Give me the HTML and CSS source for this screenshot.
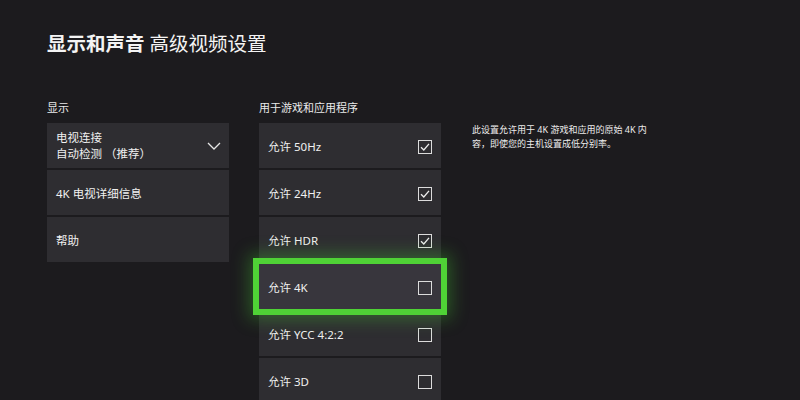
FILE: index.html
```html
<!DOCTYPE html>
<html lang="zh-CN">
<head>
<meta charset="utf-8">
<link rel="stylesheet" href="styles.css">
</head>
<body>
<div class="page">
  <h1 class="title"><span class="bold">显示和声音</span> 高级视频设置</h1>
  <div class="columns">
    <section class="col">
      <div class="label">显示</div>
      <div class="list">
        <div class="card two">
          <div class="lines">
            <div>电视连接</div>
            <div>自动检测 （推荐）</div>
          </div>
          <svg class="chev" width="14" height="8" viewBox="0 0 14 8"><path d="M1 1 L7 7 L13 1" fill="none" stroke="#e6e6e6" stroke-width="1.3"/></svg>
        </div>
        <div class="card">4K 电视详细信息</div>
        <div class="card">帮助</div>
      </div>
    </section>
    <section class="col">
      <div class="label">用于游戏和应用程序</div>
      <div class="list">
        <div class="card">允许 50Hz<span class="box on"><svg width="10" height="10" viewBox="0 0 10 10"><path d="M1 5.2 L3.8 8 L9 1.8" fill="none" stroke="#eee" stroke-width="1.3"/></svg></span></div>
        <div class="card">允许 24Hz<span class="box on"><svg width="10" height="10" viewBox="0 0 10 10"><path d="M1 5.2 L3.8 8 L9 1.8" fill="none" stroke="#eee" stroke-width="1.3"/></svg></span></div>
        <div class="card">允许 HDR<span class="box on"><svg width="10" height="10" viewBox="0 0 10 10"><path d="M1 5.2 L3.8 8 L9 1.8" fill="none" stroke="#eee" stroke-width="1.3"/></svg></span></div>
        <div class="card focus">允许 4K<span class="box"></span></div>
        <div class="card">允许 YCC 4:2:2<span class="box"></span></div>
        <div class="card">允许 3D<span class="box"></span></div>
      </div>
    </section>
    <p class="desc">此设置允许用于 4K 游戏和应用的原始 4K 内容，即使您的主机设置成低分别率。</p>
  </div>
</div>
</body>
</html>
```
FILE: styles.css
```css
html, body {
  margin: 0;
  padding: 0;
  background: #1c1b1e;
  height: 100%;
  overflow: hidden;
}
body {
  font-family: "Noto Sans", "Noto Sans CJK SC", sans-serif;
  color: #f2f2f2;
}
.page {
  padding: 30px 0 0 47px;
}
.title {
  margin: 0;
  font-size: 19.5px;
  font-weight: 400;
  line-height: 28px;
  color: #f4f4f4;
}
.title .bold {
  font-weight: 700;
}
.columns {
  display: flex;
  align-items: flex-start;
  margin-top: 42px;
}
.col {
  width: 182px;
  margin-right: 30px;
}
.label {
  font-size: 11px;
  line-height: 16px;
  height: 16px;
  margin-bottom: 7px;
  color: #eaeaea;
}
.list {
  display: flex;
  flex-direction: column;
  gap: 2px;
}
.card {
  height: 45px;
  box-sizing: border-box;
  background: #2e2d31;
  display: flex;
  align-items: center;
  justify-content: space-between;
  padding: 0 9px 0 9px;
  font-size: 11.5px;
  color: #f0f0f0;
}
.card.two {
  padding-right: 8px;
}
.lines {
  line-height: 16px;
}
.chev {
  display: block;
}
.focus {
  position: relative;
  z-index: 1;
  background: #38363d;
  box-shadow: 0 0 0 6px #4fd236, 0 0 16px 10px rgba(70, 200, 50, 0.35);
}
.box {
  width: 12px;
  height: 12px;
  border: 1.5px solid #dcdcdc;
  display: flex;
  align-items: center;
  justify-content: center;
  margin-top: 2px;
}
.desc {
  margin: 23px 0 0 1px;
  width: 178px;
  font-size: 9px;
  line-height: 14px;
  color: #ececec;
}
```
